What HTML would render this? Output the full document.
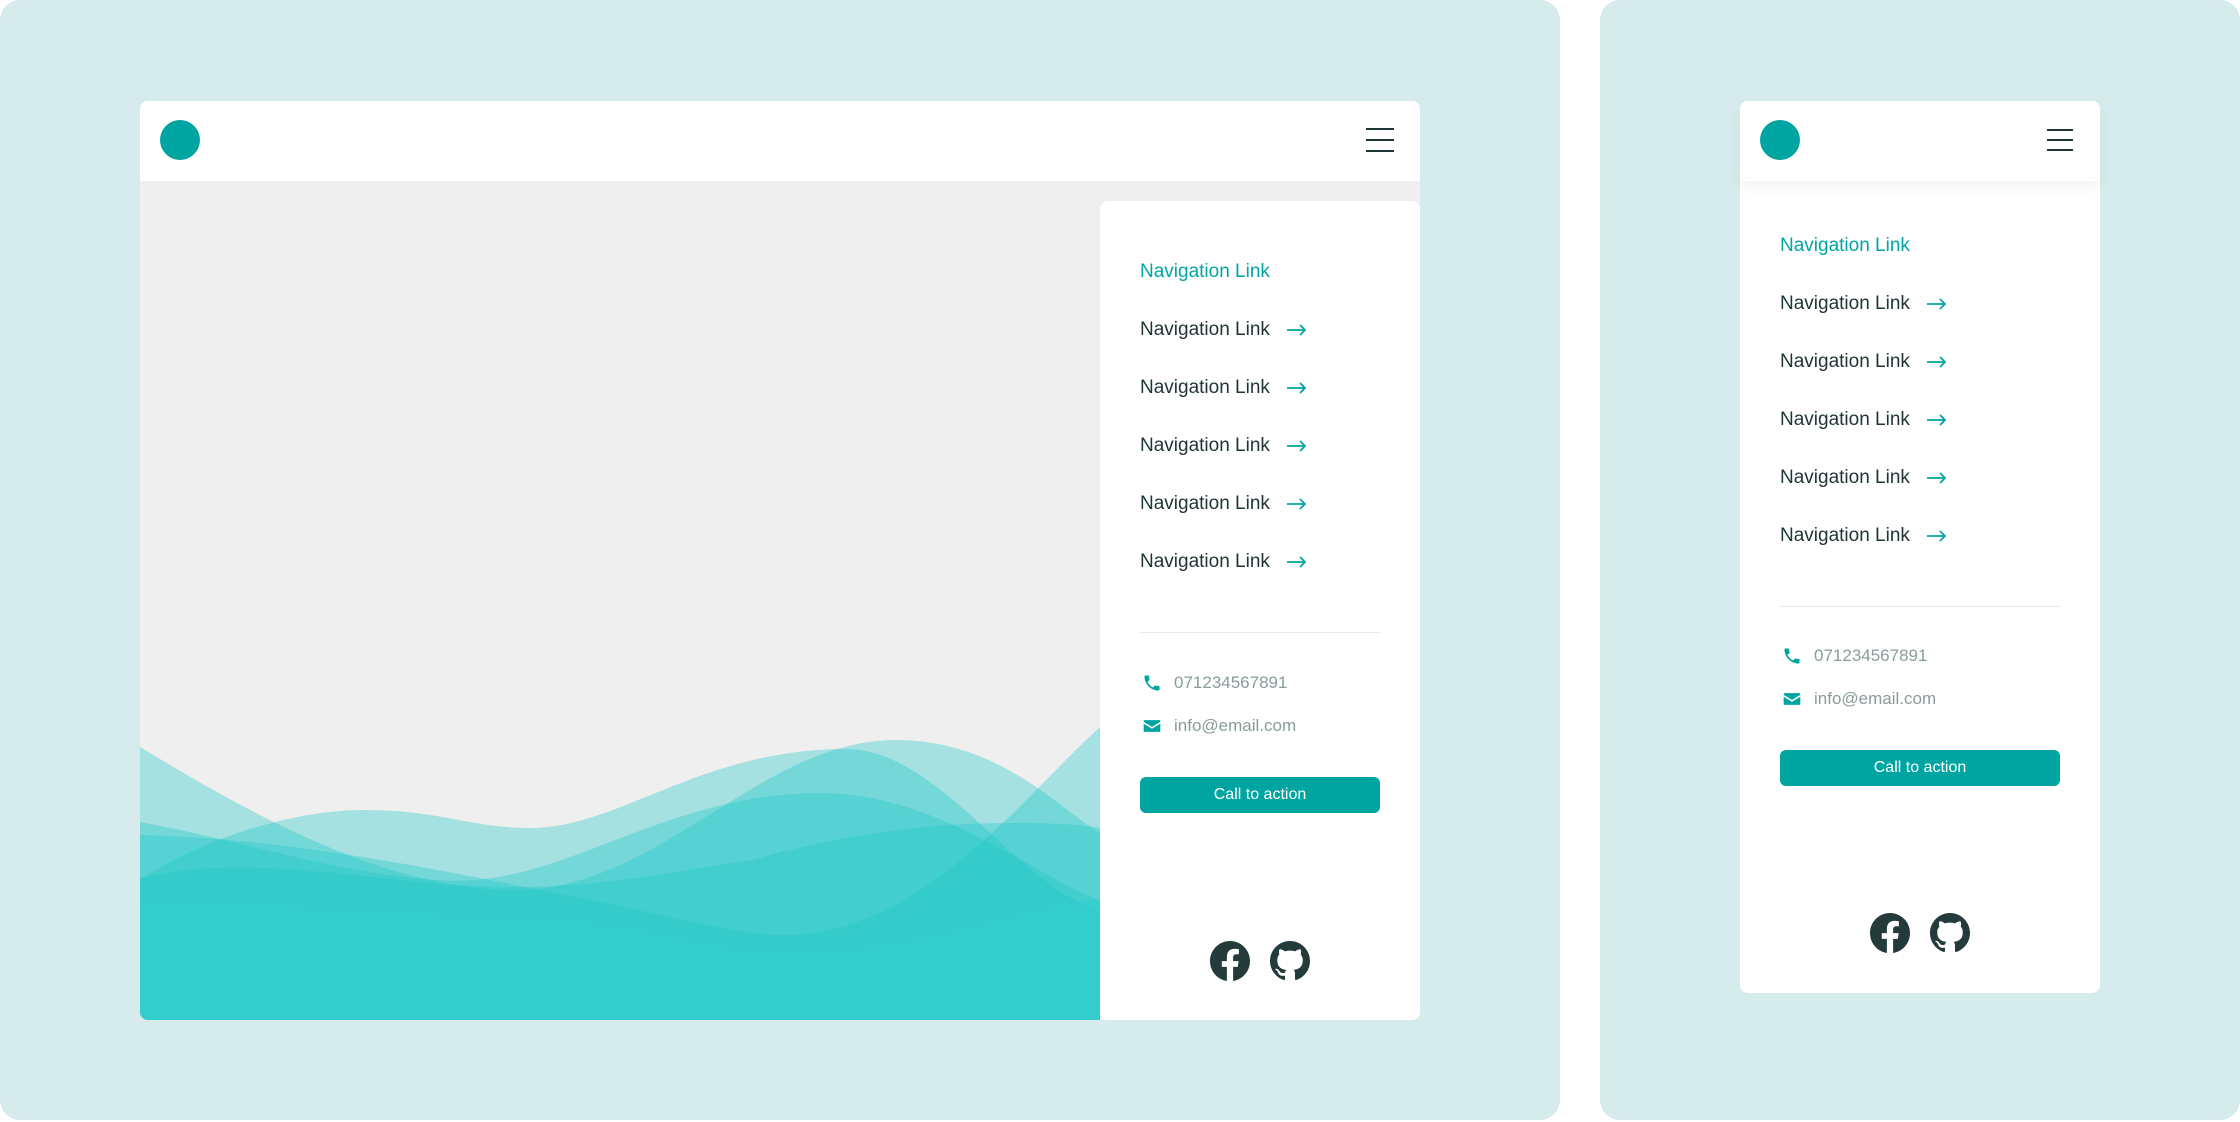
<!DOCTYPE html>
<html><head><meta charset="utf-8"><style>
*{margin:0;padding:0;box-sizing:border-box}
body{width:2240px;height:1122px;background:#fff;position:relative;overflow:hidden;font-family:"Liberation Sans",sans-serif}
.bg{position:absolute;background:#d6ebeb;border-radius:20px}
.abs{position:absolute}
.logo{position:absolute;width:40px;height:40px;border-radius:50%;background:#00a5a2}
.ham{position:absolute;width:28px;height:24px}
.ham i{position:absolute;left:0;width:100%;height:2px;background:#1f3535}
.link{position:absolute;font-size:19px;color:#1f3535;line-height:20px;white-space:nowrap}
.link.a{color:#00a5a2}
.link svg{position:absolute;left:147px;top:3px}
.div{position:absolute;height:1px;background:#e3e8e8}
.ct{position:absolute;font-size:17px;color:#8a9b9b;line-height:20px}
.ct svg{position:absolute;left:-32px;top:0}
.btn{position:absolute;background:#00a5a2;color:#fff;font-size:16px;border-radius:6px;display:flex;align-items:center;justify-content:center}
</style></head><body>
<div class="bg" style="left:0;top:0;width:1560px;height:1120px"></div>
<div class="bg" style="left:1600px;top:0;width:640px;height:1120px"></div>

<div class="abs" style="left:140px;top:101px;width:1280px;height:919px;background:#efefef;border-radius:8px;overflow:hidden">
 <div class="abs" style="left:0;top:0;width:1280px;height:80px;background:#fff"></div>
 <svg class="abs" style="left:0;top:599px" width="960" height="320" viewBox="0 0 960 320">
  <g fill="#22c8c8" fill-opacity="0.36">
   <path d="M0 47 C120 120 250 190 375 190 C520 190 620 40 756 40 C860 40 920 110 960 133 V320 H0Z"/>
   <path d="M0 180 C60 140 150 110 225 110 C300 110 330 128 390 128 C480 128 560 49 706 49 C800 49 880 190 960 210 V320H0Z"/>
   <path d="M0 122 C100 140 200 175 300 180 C420 190 520 93 680 93 C800 93 900 180 960 200 V320H0Z"/>
   <path d="M0 135 C150 138 300 170 450 200 C550 220 600 235 644 235 C780 235 880 100 960 27 V320H0Z"/>
   <path d="M0 178 C120 150 250 187 375 187 C470 187 540 170 612 160 C720 130 800 123 875 123 C920 123 945 125 960 128 V320H0Z"/>
  </g>
  <path d="M0 200 C150 200 300 215 450 220 C550 235 600 250 644 250 C780 250 880 200 960 200 V320H0Z" fill="#32cfcf" fill-opacity="0.6"/>
 </svg>
</div>
<div class="logo" style="left:160px;top:120px"></div>
<div class="ham" style="left:1366px;top:128px"><i style="top:0"></i><i style="top:11px"></i><i style="top:22px"></i></div>
<div class="abs" style="left:1100px;top:201px;width:320px;height:819px;background:#fff;border-radius:8px"></div>

<div class="link a" style="left:1140px;top:262px">Navigation Link</div>
<div class="link" style="left:1140px;top:320px">Navigation Link<svg width="20" height="14" viewBox="0 0 20 14"><path d="M0 7H18M13 2L18 7L13 12" fill="none" stroke="#00a5a2" stroke-width="1.8"/></svg></div>
<div class="link" style="left:1140px;top:378px">Navigation Link<svg width="20" height="14" viewBox="0 0 20 14"><path d="M0 7H18M13 2L18 7L13 12" fill="none" stroke="#00a5a2" stroke-width="1.8"/></svg></div>
<div class="link" style="left:1140px;top:436px">Navigation Link<svg width="20" height="14" viewBox="0 0 20 14"><path d="M0 7H18M13 2L18 7L13 12" fill="none" stroke="#00a5a2" stroke-width="1.8"/></svg></div>
<div class="link" style="left:1140px;top:494px">Navigation Link<svg width="20" height="14" viewBox="0 0 20 14"><path d="M0 7H18M13 2L18 7L13 12" fill="none" stroke="#00a5a2" stroke-width="1.8"/></svg></div>
<div class="link" style="left:1140px;top:552px">Navigation Link<svg width="20" height="14" viewBox="0 0 20 14"><path d="M0 7H18M13 2L18 7L13 12" fill="none" stroke="#00a5a2" stroke-width="1.8"/></svg></div>
<div class="div" style="left:1140px;top:632px;width:240px"></div>
<div class="ct" style="left:1174px;top:673px"><svg width="20" height="20" viewBox="0 0 24 24"><path fill="#00a5a2" d="M6.6 10.8c1.4 2.8 3.8 5.1 6.6 6.6l2.2-2.2c.3-.3.7-.4 1-.2 1.1.4 2.3.6 3.6.6.6 0 1 .4 1 1V20c0 .6-.4 1-1 1C10.6 21 3 13.4 3 4c0-.6.4-1 1-1h3.5c.6 0 1 .4 1 1 0 1.3.2 2.5.6 3.6.1.3 0 .7-.2 1z"/></svg>071234567891</div>
<div class="ct" style="left:1174px;top:716px"><svg width="20" height="20" viewBox="0 0 24 24"><path fill="#00a5a2" d="M3 5h18c.6 0 1 .4 1 1v1l-10 6L2 7V6c0-.6.4-1 1-1zM2 9.3l10 6 10-6V18c0 .6-.4 1-1 1H3c-.6 0-1-.4-1-1z"/></svg>info@email.com</div>
<div class="btn" style="left:1140px;top:777px;width:240px;height:36px">Call to action</div>
<svg class="abs" style="left:1210px;top:941px" width="40" height="40" viewBox="0 0 24 24"><path fill="#253b3b" d="M24 12.07C24 5.4 18.63 0 12 0S0 5.4 0 12.07C0 18.1 4.39 23.1 10.13 24v-8.44H7.08v-3.49h3.05V9.41c0-3.02 1.79-4.7 4.53-4.7 1.31 0 2.68.24 2.68.24v2.97h-1.51c-1.49 0-1.96.93-1.96 1.89v2.26h3.33l-.53 3.49h-2.8V24C19.61 23.1 24 18.1 24 12.07z"/></svg>
<svg class="abs" style="left:1270px;top:941px" width="40" height="40" viewBox="0 0 24 24"><path fill="#253b3b" d="M12 0C5.37 0 0 5.37 0 12c0 5.3 3.440 9.8 8.2 11.39.6.11.82-.26.82-.58v-2.03c-3.34.73-4.04-1.61-4.04-1.61-.55-1.39-1.34-1.76-1.34-1.76-1.09-.74.08-.73.08-.73 1.2.08 1.84 1.24 1.84 1.24 1.07 1.84 2.81 1.31 3.5 1 .11-.78.42-1.31.76-1.61-2.67-.3-5.47-1.33-5.47-5.93 0-1.31.47-2.38 1.24-3.22-.13-.3-.54-1.52.12-3.18 0 0 1.01-.32 3.3 1.230.96-.27 1.98-.4 3-.4s2.04.14 3 .4c2.29-1.55 3.3-1.23 3.3-1.23.66 1.65.24 2.88.12 3.18.77.84 1.23 1.91 1.23 3.22 0 4.61-2.81 5.62-5.48 5.92.43.37.82 1.1.82 2.22v3.29c0 .32.21.69.82.58C20.57 21.8 24 17.3 24 12 24 5.37 18.63 0 12 0z"/></svg>

<div class="abs" style="left:1740px;top:101px;width:360px;height:892px;background:#fff;border-radius:8px"></div>
<div class="abs" style="left:1740px;top:101px;width:360px;height:80px;background:#fff;border-radius:8px 8px 0 0;box-shadow:0 6px 14px rgba(0,0,0,0.05)"></div>
<div class="logo" style="left:1760px;top:120px"></div>
<div class="ham" style="left:2047px;top:129px;width:26px;height:22px"><i style="top:0"></i><i style="top:10px"></i><i style="top:20px"></i></div>
<div class="link a" style="left:1780px;top:236px">Navigation Link</div>
<div class="link" style="left:1780px;top:294px">Navigation Link<svg width="20" height="14" viewBox="0 0 20 14"><path d="M0 7H18M13 2L18 7L13 12" fill="none" stroke="#00a5a2" stroke-width="1.8"/></svg></div>
<div class="link" style="left:1780px;top:352px">Navigation Link<svg width="20" height="14" viewBox="0 0 20 14"><path d="M0 7H18M13 2L18 7L13 12" fill="none" stroke="#00a5a2" stroke-width="1.8"/></svg></div>
<div class="link" style="left:1780px;top:410px">Navigation Link<svg width="20" height="14" viewBox="0 0 20 14"><path d="M0 7H18M13 2L18 7L13 12" fill="none" stroke="#00a5a2" stroke-width="1.8"/></svg></div>
<div class="link" style="left:1780px;top:468px">Navigation Link<svg width="20" height="14" viewBox="0 0 20 14"><path d="M0 7H18M13 2L18 7L13 12" fill="none" stroke="#00a5a2" stroke-width="1.8"/></svg></div>
<div class="link" style="left:1780px;top:526px">Navigation Link<svg width="20" height="14" viewBox="0 0 20 14"><path d="M0 7H18M13 2L18 7L13 12" fill="none" stroke="#00a5a2" stroke-width="1.8"/></svg></div>
<div class="div" style="left:1780px;top:606px;width:280px"></div>
<div class="ct" style="left:1814px;top:646px"><svg width="20" height="20" viewBox="0 0 24 24"><path fill="#00a5a2" d="M6.6 10.8c1.4 2.8 3.8 5.1 6.6 6.6l2.2-2.2c.3-.3.7-.4 1-.2 1.1.4 2.3.6 3.6.6.6 0 1 .4 1 1V20c0 .6-.4 1-1 1C10.6 21 3 13.4 3 4c0-.6.4-1 1-1h3.5c.6 0 1 .4 1 1 0 1.3.2 2.5.6 3.6.1.3 0 .7-.2 1z"/></svg>071234567891</div>
<div class="ct" style="left:1814px;top:689px"><svg width="20" height="20" viewBox="0 0 24 24"><path fill="#00a5a2" d="M3 5h18c.6 0 1 .4 1 1v1l-10 6L2 7V6c0-.6.4-1 1-1zM2 9.3l10 6 10-6V18c0 .6-.4 1-1 1H3c-.6 0-1-.4-1-1z"/></svg>info@email.com</div>
<div class="btn" style="left:1780px;top:750px;width:280px;height:36px">Call to action</div>
<svg class="abs" style="left:1870px;top:913px" width="40" height="40" viewBox="0 0 24 24"><path fill="#253b3b" d="M24 12.07C24 5.4 18.63 0 12 0S0 5.4 0 12.07C0 18.1 4.39 23.1 10.13 24v-8.44H7.08v-3.49h3.05V9.41c0-3.02 1.79-4.7 4.53-4.7 1.31 0 2.68.24 2.68.24v2.97h-1.51c-1.49 0-1.96.93-1.96 1.89v2.26h3.33l-.53 3.49h-2.8V24C19.61 23.1 24 18.1 24 12.07z"/></svg>
<svg class="abs" style="left:1930px;top:913px" width="40" height="40" viewBox="0 0 24 24"><path fill="#253b3b" d="M12 0C5.37 0 0 5.37 0 12c0 5.3 3.44 9.8 8.2 11.39.6.11.82-.26.82-.58v-2.03c-3.34.73-4.04-1.61-4.04-1.61-.55-1.39-1.34-1.76-1.34-1.76-1.09-.74.08-.73.08-.73 1.2.08 1.84 1.24 1.84 1.24 1.07 1.84 2.81 1.31 3.5 1 .11-.78.42-1.31.76-1.61-2.67-.3-5.47-1.33-5.47-5.93 0-1.31.47-2.38 1.24-3.22-.13-.3-.54-1.52.12-3.18 0 0 1.01-.32 3.3 1.23.96-.27 1.98-.4 3-.4s2.04.14 3 .4c2.29-1.55 3.3-1.23 3.3-1.23.66 1.65.24 2.88.12 3.18.77.84 1.23 1.91 1.23 3.22 0 4.61-2.81 5.62-5.48 5.92.43.37.82 1.1.82 2.22v3.29c0 .32.21.69.82.58C20.57 21.8 24 17.3 24 12 24 5.37 18.63 0 12 0z"/></svg>
</body></html>
